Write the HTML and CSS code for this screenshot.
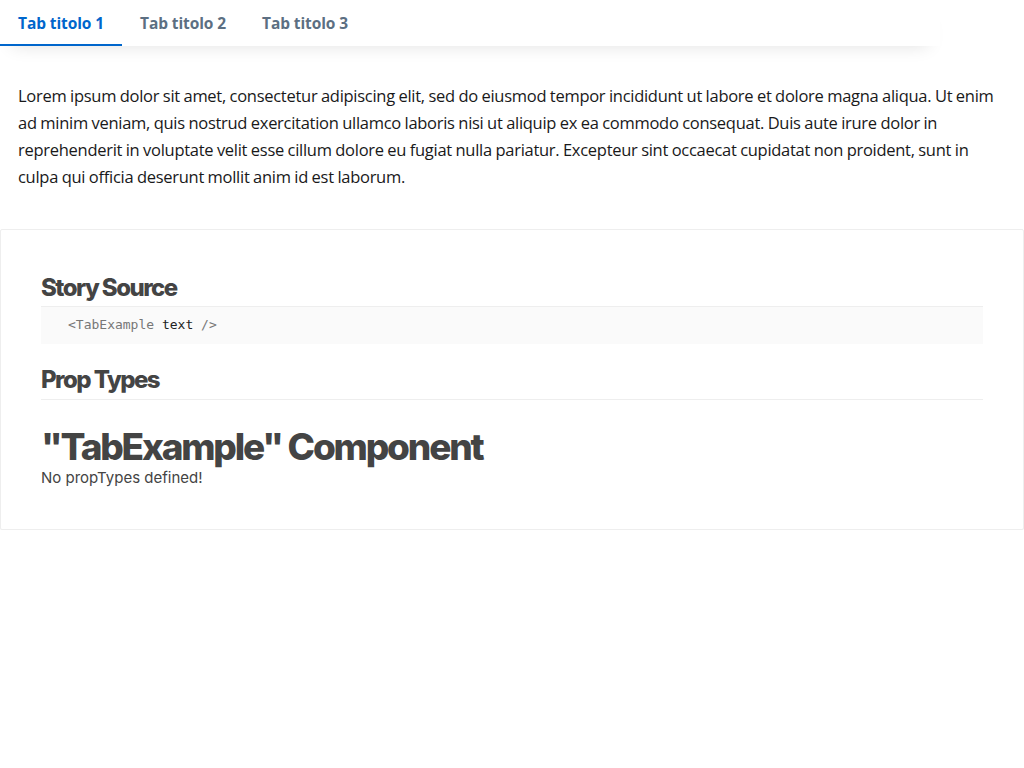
FILE: index.html
```html
<!DOCTYPE html>
<html lang="it">
<head>
<meta charset="utf-8">
<title>Tab</title>
<link rel="stylesheet" href="styles.css">
</head>
<body>
<div class="tabs-wrap">
  <nav class="tabs">
    <a class="tab active">Tab titolo 1</a>
    <a class="tab">Tab titolo 2</a>
    <a class="tab">Tab titolo 3</a>
  </nav>
</div>
<p class="lead">Lorem ipsum dolor sit amet, consectetur adipiscing elit, sed do eiusmod tempor incididunt ut labore et dolore magna aliqua. Ut enim ad minim veniam, quis nostrud exercitation ullamco laboris nisi ut aliquip ex ea commodo consequat. Duis aute irure dolor in reprehenderit in voluptate velit esse cillum dolore eu fugiat nulla pariatur. Excepteur sint occaecat cupidatat non proident, sunt in culpa qui officia deserunt mollit anim id est laborum.</p>
<section class="info">
  <h2 class="info-title">Story Source</h2>
  <pre class="code"><span class="tag">&lt;TabExample</span> <span class="attr">text</span> <span class="tag">/&gt;</span></pre>
  <h2 class="info-title rule">Prop Types</h2>
  <h1 class="comp-title">"TabExample" Component</h1>
  <div class="noprops">No propTypes defined!</div>
</section>
</body>
</html>
```
FILE: styles.css
```css
html, body {
  margin: 0;
  padding: 0;
  background: #fff;
}
body {
  font-family: "Open Sans", "Noto Sans", sans-serif;
}
.tabs-wrap {
  width: 940px;
  box-shadow: 0 12px 18px -12px rgba(0,0,0,0.12);
}
.tabs {
  display: flex;
  height: 46px;
  background: #fff;
}
.tab {
  display: block;
  padding: 0 18px 0 18px;
  width: 86px;
  line-height: 46px;
  font-size: 15.5px;
  font-weight: 700;
  color: #5c6f82;
  letter-spacing: -0.1px;
  white-space: nowrap;
  box-sizing: content-box;
}
.tab.active {
  color: #0066cc;
  box-shadow: inset 0 -2px 0 #0066cc;
}
.lead {
  margin: 36px 18px 0 18px;
  font-size: 16.5px;
  line-height: 27px;
  color: #19191a;
  letter-spacing: -0.28px;
  word-spacing: -0.4px;
}
.info {
  margin: 39px 0 0 0;
  border: 1px solid #eee;
  border-radius: 2px;
  box-shadow: 0 2px 3px rgba(0,0,0,0.05);
  padding: 40px 40px 42px 40px;
  font-family: "Liberation Sans", Arial, sans-serif;
  color: #444;
}
.info-title {
  margin: 0;
  font-family: Inter, "Liberation Sans", sans-serif;
  font-size: 24px;
  font-weight: 800;
  letter-spacing: -1.55px;
  line-height: 36px;
  color: #444;
}
.code {
  margin: 0 0 18px 0;
  border-top: 1px solid #eee;
  background: #fafafa;
  padding: 9px 27px 10px 27px;
  font-family: "DejaVu Sans Mono", monospace;
  font-size: 13px;
  line-height: 18px;
}
.code .tag { color: #777; }
.code .attr { color: #222; }
.info-title.rule {
  border-bottom: 1px solid #eee;
  padding-bottom: 1px;
}
.comp-title {
  margin: 25px 0 0 0;
  font-family: Inter, "Liberation Sans", sans-serif;
  font-size: 37px;
  font-weight: 800;
  letter-spacing: -2.2px;
  line-height: 44px;
  color: #444;
}
.noprops {
  font-family: Inter, "Liberation Sans", sans-serif;
  font-size: 15px;
  line-height: 18px;
  color: #444;
}
```
